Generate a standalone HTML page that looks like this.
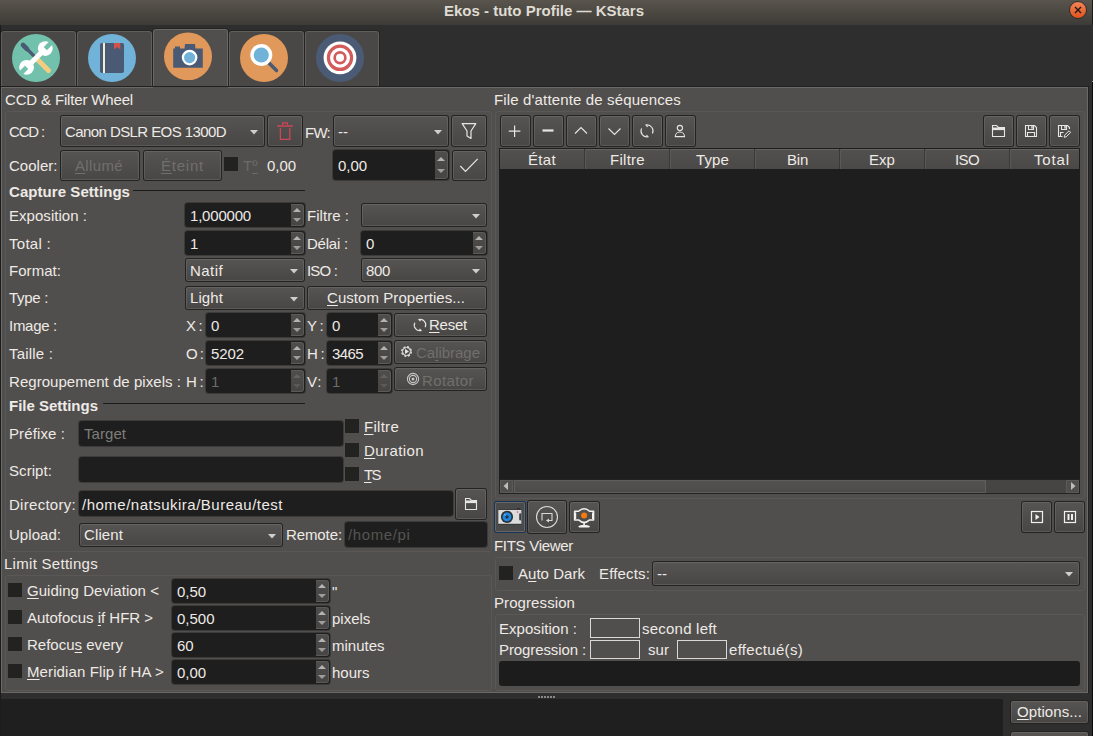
<!DOCTYPE html>
<html><head><meta charset="utf-8"><style>
html,body{margin:0;padding:0;width:1093px;height:736px;overflow:hidden;background:#2e2e2e;}
body>div,body>svg{position:absolute;}
.t{font-family:'Liberation Sans', sans-serif;line-height:20px;white-space:pre;}
u{text-decoration:underline;text-underline-offset:2px;}
</style></head><body>
<div style="left:0px;top:0px;width:1093px;height:25px;background:linear-gradient(#59554d,#3d3b37);"></div><svg style="left:1068px;top:0px" width="22" height="21"><defs><linearGradient id="cg" x1="0" y1="0" x2="0" y2="1"><stop offset="0" stop-color="#f58559"/><stop offset="1" stop-color="#df521c"/></linearGradient></defs><circle cx="10" cy="10" r="8.5" fill="url(#cg)" stroke="#2d2c29" stroke-width="1"/><path d="M7 7L13 13M13 7L7 13" stroke="#1a1a12" stroke-width="1.4"/></svg><div style="left:0px;top:25px;width:1092px;height:62px;background:#2e2e2e;"></div><div style="left:0px;top:30px;width:77px;height:57px;background:#232322;border-radius:4px 4px 0 0;"></div><div style="left:1px;top:31px;width:75px;height:55px;background:#605f5d;border-radius:3px 3px 0 0;"></div><div style="left:2px;top:32px;width:73px;height:54px;background:#4a4846;border-radius:2px 2px 0 0;"></div><div style="left:76px;top:30px;width:77px;height:57px;background:#232322;border-radius:4px 4px 0 0;"></div><div style="left:77px;top:31px;width:75px;height:55px;background:#605f5d;border-radius:3px 3px 0 0;"></div><div style="left:78px;top:32px;width:73px;height:54px;background:#4a4846;border-radius:2px 2px 0 0;"></div><div style="left:152px;top:28px;width:77px;height:60px;background:#232322;border-radius:4px 4px 0 0;"></div><div style="left:153px;top:29px;width:75px;height:59px;background:#6a6967;border-radius:3px 3px 0 0;"></div><div style="left:154px;top:30px;width:73px;height:59px;background:#514f4d;border-radius:2px 2px 0 0;"></div><div style="left:228px;top:30px;width:77px;height:57px;background:#232322;border-radius:4px 4px 0 0;"></div><div style="left:229px;top:31px;width:75px;height:55px;background:#605f5d;border-radius:3px 3px 0 0;"></div><div style="left:230px;top:32px;width:73px;height:54px;background:#4a4846;border-radius:2px 2px 0 0;"></div><div style="left:304px;top:30px;width:76px;height:57px;background:#232322;border-radius:4px 4px 0 0;"></div><div style="left:305px;top:31px;width:74px;height:55px;background:#605f5d;border-radius:3px 3px 0 0;"></div><div style="left:306px;top:32px;width:72px;height:54px;background:#4a4846;border-radius:2px 2px 0 0;"></div><div style="left:0px;top:86px;width:1089px;height:608px;background:#212121;"></div><div style="left:1px;top:87px;width:1087px;height:606px;background:#6a6967;"></div><div style="left:2px;top:88px;width:1085px;height:604px;background:#514f4d;"></div><div style="left:153px;top:87px;width:75px;height:2px;background:#514f4d;"></div><div style="left:0px;top:693px;width:1092px;height:43px;background:#2e2e2e;"></div><div style="left:0px;top:699px;width:1003px;height:37px;background:#1f1f1f;"></div><div style="left:0px;top:25px;width:1px;height:711px;background:#1c1c1c;"></div><div style="left:1092px;top:0px;width:1px;height:25px;background:#1a1a18;"></div><div style="left:1092px;top:82px;width:1px;height:654px;background:#0a0a0a;"></div><div style="left:1092px;top:81px;width:1px;height:1px;background:#9a9a9a;"></div><svg style="left:12px;top:34px" width="48" height="48" viewBox="0 0 48 48">
<defs><mask id="wm"><rect width="48" height="48" fill="#fff"/>
<path d="M33.3 14.6L42 5.9" stroke="#000" stroke-width="4.6"/>
<path d="M14.6 33.3L5.9 42" stroke="#000" stroke-width="4.6"/></mask></defs>
<circle cx="24" cy="24" r="24" fill="#72c1ad"/>
<path d="M11 11L22.5 22.5" stroke="#4b5a74" stroke-width="3.2" stroke-linecap="round"/>
<path d="M11 11L15 15" stroke="#4b5a74" stroke-width="4.6" stroke-linecap="round"/>
<path d="M25.5 25.5L36.5 36.5" stroke="#f5cd80" stroke-width="5" stroke-linecap="round"/>
<g mask="url(#wm)" fill="#fff">
<path d="M16 32L32 16" stroke="#fff" stroke-width="5.2"/>
<circle cx="33.3" cy="14.6" r="7.4"/>
<circle cx="14.6" cy="33.3" r="7.4"/>
</g>
</svg><svg style="left:88px;top:34px" width="48" height="48" viewBox="0 0 48 48">
<circle cx="24" cy="24" r="24" fill="#71b2d8"/>
<rect x="12" y="9" width="24" height="30" rx="2" fill="#4b5a74"/>
<rect x="15" y="9" width="2" height="30" fill="#f3ecd6"/>
<path d="M26 9H32.3V15.5L29.15 13L26 15.5Z" fill="#d6504c"/>
</svg><svg style="left:164px;top:32px" width="48" height="48" viewBox="0 0 48 48">
<circle cx="24" cy="24.4" r="24" fill="#e0995a"/>
<path d="M9.2 16.5H11V14.4H16V16.5H20.5L21 12.1H31L31.5 16.5H38.8V35.8H9.2Z" fill="#4b5a74"/>
<circle cx="25.6" cy="25.6" r="7.8" fill="#fff"/>
<circle cx="25.6" cy="25.6" r="5.6" fill="#71b2d8"/>
</svg><svg style="left:240px;top:34px" width="48" height="48" viewBox="0 0 48 48">
<circle cx="24" cy="24" r="24" fill="#e0995a"/>
<path d="M29 29L36.5 36.5" stroke="#4b5a74" stroke-width="3.6" stroke-linecap="round"/>
<circle cx="21.3" cy="21" r="11" fill="#fff"/>
<circle cx="21.3" cy="21" r="7.6" fill="#71b2d8"/>
</svg><svg style="left:316px;top:34px" width="48" height="48" viewBox="0 0 48 48">
<circle cx="24" cy="24" r="24" fill="#4b5b75"/>
<circle cx="24" cy="23.8" r="16.4" fill="#fff"/>
<circle cx="24" cy="23.8" r="11.6" fill="none" stroke="#d35b5b" stroke-width="3.2"/>
<circle cx="24" cy="23.8" r="5.35" fill="none" stroke="#d35b5b" stroke-width="2.7"/>
</svg><div style="left:5px;top:111px;width:487px;height:441px;border:1px solid #595856;border-radius:3px;box-sizing:border-box;"></div><div style="left:60px;top:115px;width:205px;height:32px;border-radius:3px;background:#232322;"></div><div style="left:61px;top:116px;width:203px;height:30px;border-radius:2px;background:linear-gradient(#646361,#5a5957);"></div><div style="left:62px;top:117px;width:201px;height:28px;border-radius:1px;background:linear-gradient(#555452,#484745);"></div><svg style="left:250px;top:130px" width="8" height="5"><path d="M0 0H8L4 4.5Z" fill="#cfcecc"/></svg><div style="left:267px;top:115px;width:36px;height:32px;border-radius:3px;background:#232322;"></div><div style="left:268px;top:116px;width:34px;height:30px;border-radius:2px;background:linear-gradient(#646361,#5a5957);"></div><div style="left:269px;top:117px;width:32px;height:28px;border-radius:1px;background:linear-gradient(#555452,#484745);"></div><svg style="left:276px;top:120px" width="18" height="22"><path d="M1.2 6H16.8" stroke="#cc4655" stroke-width="1.5"/><path d="M6.6 5V2.9H11.4V5" fill="none" stroke="#cc4655" stroke-width="1.2"/><path d="M4.4 8V19.3H13.8V8" fill="none" stroke="#cc4655" stroke-width="1.3"/></svg><div style="left:333px;top:115px;width:116px;height:32px;border-radius:3px;background:#232322;"></div><div style="left:334px;top:116px;width:114px;height:30px;border-radius:2px;background:linear-gradient(#646361,#5a5957);"></div><div style="left:335px;top:117px;width:112px;height:28px;border-radius:1px;background:linear-gradient(#555452,#484745);"></div><svg style="left:434px;top:130px" width="8" height="5"><path d="M0 0H8L4 4.5Z" fill="#cfcecc"/></svg><div style="left:451px;top:115px;width:36px;height:32px;border-radius:3px;background:#232322;"></div><div style="left:452px;top:116px;width:34px;height:30px;border-radius:2px;background:linear-gradient(#646361,#5a5957);"></div><div style="left:453px;top:117px;width:32px;height:28px;border-radius:1px;background:linear-gradient(#555452,#484745);"></div><svg style="left:459px;top:121px" width="20" height="20"><path d="M3.2 2.6H16.8L12 10V17.5L8 15V10Z" fill="none" stroke="#e8e6e4" stroke-width="1.2" stroke-linejoin="round"/></svg><div style="left:60px;top:150px;width:80px;height:31px;border-radius:3px;background:#232322;"></div><div style="left:61px;top:151px;width:78px;height:29px;border-radius:2px;background:linear-gradient(#646361,#5a5957);"></div><div style="left:62px;top:152px;width:76px;height:27px;border-radius:1px;background:linear-gradient(#555452,#484745);"></div><div style="left:143px;top:150px;width:79px;height:31px;border-radius:3px;background:#232322;"></div><div style="left:144px;top:151px;width:77px;height:29px;border-radius:2px;background:linear-gradient(#646361,#5a5957);"></div><div style="left:145px;top:152px;width:75px;height:27px;border-radius:1px;background:linear-gradient(#555452,#484745);"></div><div style="left:224px;top:157px;width:14px;height:14px;background:#222221;"></div><div style="left:333px;top:150px;width:116px;height:30px;border-radius:3px;background:#1e1e1e;box-shadow:0 0 0 1px #3c3b3a;"></div><div style="left:435px;top:151px;width:13px;height:28px;background:#5c5b59;border-radius:0 3px 3px 0;"></div><div style="left:435px;top:152px;width:12px;height:26px;background:linear-gradient(#4e4d4b,#464544);border-radius:0 2px 2px 0;"></div><svg style="left:435px;top:150px" width="14" height="30"><path d="M2 11L6 7L10 11Z" fill="#b4b3b1"/><path d="M2 19L6 23L10 19Z" fill="#9e9d9b"/></svg><div style="left:452px;top:150px;width:35px;height:31px;border-radius:3px;background:#232322;"></div><div style="left:453px;top:151px;width:33px;height:29px;border-radius:2px;background:linear-gradient(#646361,#5a5957);"></div><div style="left:454px;top:152px;width:31px;height:27px;border-radius:1px;background:linear-gradient(#555452,#484745);"></div><svg style="left:459px;top:155px" width="20" height="20"><path d="M1.3 11L6.5 16.5L18.7 3.8" fill="none" stroke="#e8e6e4" stroke-width="1.2"/></svg><div style="left:133px;top:190px;width:172px;height:1px;background:#1c1c1c;"></div><div style="left:185px;top:203px;width:120px;height:24px;border-radius:3px;background:#1e1e1e;box-shadow:0 0 0 1px #3c3b3a;"></div><div style="left:291px;top:204px;width:13px;height:22px;background:#5c5b59;border-radius:0 3px 3px 0;"></div><div style="left:291px;top:205px;width:12px;height:20px;background:linear-gradient(#4e4d4b,#464544);border-radius:0 2px 2px 0;"></div><svg style="left:291px;top:203px" width="14" height="24"><path d="M2 9L6 5L10 9Z" fill="#b4b3b1"/><path d="M2 15L6 19L10 15Z" fill="#9e9d9b"/></svg><div style="left:361px;top:203px;width:126px;height:24px;border-radius:3px;background:#232322;"></div><div style="left:362px;top:204px;width:124px;height:22px;border-radius:2px;background:linear-gradient(#646361,#5a5957);"></div><div style="left:363px;top:205px;width:122px;height:20px;border-radius:1px;background:linear-gradient(#555452,#484745);"></div><svg style="left:472px;top:214px" width="8" height="5"><path d="M0 0H8L4 4.5Z" fill="#cfcecc"/></svg><div style="left:185px;top:231px;width:120px;height:24px;border-radius:3px;background:#1e1e1e;box-shadow:0 0 0 1px #3c3b3a;"></div><div style="left:291px;top:232px;width:13px;height:22px;background:#5c5b59;border-radius:0 3px 3px 0;"></div><div style="left:291px;top:233px;width:12px;height:20px;background:linear-gradient(#4e4d4b,#464544);border-radius:0 2px 2px 0;"></div><svg style="left:291px;top:231px" width="14" height="24"><path d="M2 9L6 5L10 9Z" fill="#b4b3b1"/><path d="M2 15L6 19L10 15Z" fill="#9e9d9b"/></svg><div style="left:361px;top:231px;width:126px;height:24px;border-radius:3px;background:#1e1e1e;box-shadow:0 0 0 1px #3c3b3a;"></div><div style="left:473px;top:232px;width:13px;height:22px;background:#5c5b59;border-radius:0 3px 3px 0;"></div><div style="left:473px;top:233px;width:12px;height:20px;background:linear-gradient(#4e4d4b,#464544);border-radius:0 2px 2px 0;"></div><svg style="left:473px;top:231px" width="14" height="24"><path d="M2 9L6 5L10 9Z" fill="#b4b3b1"/><path d="M2 15L6 19L10 15Z" fill="#9e9d9b"/></svg><div style="left:185px;top:258px;width:120px;height:24px;border-radius:3px;background:#232322;"></div><div style="left:186px;top:259px;width:118px;height:22px;border-radius:2px;background:linear-gradient(#646361,#5a5957);"></div><div style="left:187px;top:260px;width:116px;height:20px;border-radius:1px;background:linear-gradient(#555452,#484745);"></div><svg style="left:290px;top:269px" width="8" height="5"><path d="M0 0H8L4 4.5Z" fill="#cfcecc"/></svg><div style="left:361px;top:258px;width:126px;height:24px;border-radius:3px;background:#232322;"></div><div style="left:362px;top:259px;width:124px;height:22px;border-radius:2px;background:linear-gradient(#646361,#5a5957);"></div><div style="left:363px;top:260px;width:122px;height:20px;border-radius:1px;background:linear-gradient(#555452,#484745);"></div><svg style="left:472px;top:269px" width="8" height="5"><path d="M0 0H8L4 4.5Z" fill="#cfcecc"/></svg><div style="left:185px;top:286px;width:120px;height:24px;border-radius:3px;background:#232322;"></div><div style="left:186px;top:287px;width:118px;height:22px;border-radius:2px;background:linear-gradient(#646361,#5a5957);"></div><div style="left:187px;top:288px;width:116px;height:20px;border-radius:1px;background:linear-gradient(#555452,#484745);"></div><svg style="left:290px;top:297px" width="8" height="5"><path d="M0 0H8L4 4.5Z" fill="#cfcecc"/></svg><div style="left:307px;top:286px;width:180px;height:24px;border-radius:3px;background:#232322;"></div><div style="left:308px;top:287px;width:178px;height:22px;border-radius:2px;background:linear-gradient(#646361,#5a5957);"></div><div style="left:309px;top:288px;width:176px;height:20px;border-radius:1px;background:linear-gradient(#555452,#484745);"></div><div style="left:206px;top:313px;width:99px;height:24px;border-radius:3px;background:#1e1e1e;box-shadow:0 0 0 1px #3c3b3a;"></div><div style="left:291px;top:314px;width:13px;height:22px;background:#5c5b59;border-radius:0 3px 3px 0;"></div><div style="left:291px;top:315px;width:12px;height:20px;background:linear-gradient(#4e4d4b,#464544);border-radius:0 2px 2px 0;"></div><svg style="left:291px;top:313px" width="14" height="24"><path d="M2 9L6 5L10 9Z" fill="#b4b3b1"/><path d="M2 15L6 19L10 15Z" fill="#9e9d9b"/></svg><div style="left:327px;top:313px;width:65px;height:24px;border-radius:3px;background:#1e1e1e;box-shadow:0 0 0 1px #3c3b3a;"></div><div style="left:378px;top:314px;width:13px;height:22px;background:#5c5b59;border-radius:0 3px 3px 0;"></div><div style="left:378px;top:315px;width:12px;height:20px;background:linear-gradient(#4e4d4b,#464544);border-radius:0 2px 2px 0;"></div><svg style="left:378px;top:313px" width="14" height="24"><path d="M2 9L6 5L10 9Z" fill="#b4b3b1"/><path d="M2 15L6 19L10 15Z" fill="#9e9d9b"/></svg><div style="left:394px;top:313px;width:93px;height:24px;border-radius:3px;background:#232322;"></div><div style="left:395px;top:314px;width:91px;height:22px;border-radius:2px;background:linear-gradient(#646361,#5a5957);"></div><div style="left:396px;top:315px;width:89px;height:20px;border-radius:1px;background:linear-gradient(#555452,#484745);"></div><svg style="left:412px;top:318px" width="16" height="16"><path d="M6.9 1.6A5.5 5.5 0 0 1 13.2 9.3M9.1 12.4A5.5 5.5 0 0 1 2.8 4.7" fill="none" stroke="#e8e6e4" stroke-width="1.1"/><path d="M6.5 1.2L8.5 3.2M9.5 12.8L7.5 10.8" fill="none" stroke="#e8e6e4" stroke-width="1.1"/></svg><div style="left:206px;top:341px;width:99px;height:24px;border-radius:3px;background:#1e1e1e;box-shadow:0 0 0 1px #3c3b3a;"></div><div style="left:291px;top:342px;width:13px;height:22px;background:#5c5b59;border-radius:0 3px 3px 0;"></div><div style="left:291px;top:343px;width:12px;height:20px;background:linear-gradient(#4e4d4b,#464544);border-radius:0 2px 2px 0;"></div><svg style="left:291px;top:341px" width="14" height="24"><path d="M2 9L6 5L10 9Z" fill="#b4b3b1"/><path d="M2 15L6 19L10 15Z" fill="#9e9d9b"/></svg><div style="left:327px;top:341px;width:65px;height:24px;border-radius:3px;background:#1e1e1e;box-shadow:0 0 0 1px #3c3b3a;"></div><div style="left:378px;top:342px;width:13px;height:22px;background:#5c5b59;border-radius:0 3px 3px 0;"></div><div style="left:378px;top:343px;width:12px;height:20px;background:linear-gradient(#4e4d4b,#464544);border-radius:0 2px 2px 0;"></div><svg style="left:378px;top:341px" width="14" height="24"><path d="M2 9L6 5L10 9Z" fill="#b4b3b1"/><path d="M2 15L6 19L10 15Z" fill="#9e9d9b"/></svg><div style="left:394px;top:340px;width:93px;height:24px;border-radius:3px;background:#232322;"></div><div style="left:395px;top:341px;width:91px;height:22px;border-radius:2px;background:linear-gradient(#646361,#5a5957);"></div><div style="left:396px;top:342px;width:89px;height:20px;border-radius:1px;background:linear-gradient(#555452,#484745);"></div><svg style="left:399px;top:344px" width="15" height="15"><circle cx="7.5" cy="7.5" r="4.8" fill="none" stroke="#e8e6e4" stroke-width="1.3" stroke-dasharray="2.2 1.57"/><circle cx="7.5" cy="7.5" r="4" fill="none" stroke="#e8e6e4" stroke-width="1"/><path d="M6 5V10L10 7.5Z" fill="#e8e6e4"/></svg><div style="left:206px;top:369px;width:99px;height:24px;border-radius:3px;background:#1e1e1e;box-shadow:0 0 0 1px #3c3b3a;"></div><div style="left:291px;top:370px;width:13px;height:22px;background:#5c5b59;border-radius:0 3px 3px 0;"></div><div style="left:291px;top:371px;width:12px;height:20px;background:linear-gradient(#4e4d4b,#464544);border-radius:0 2px 2px 0;"></div><svg style="left:291px;top:369px" width="14" height="24"><path d="M2 9L6 5L10 9Z" fill="#626160"/><path d="M2 15L6 19L10 15Z" fill="#5a5957"/></svg><div style="left:327px;top:369px;width:65px;height:24px;border-radius:3px;background:#1e1e1e;box-shadow:0 0 0 1px #3c3b3a;"></div><div style="left:378px;top:370px;width:13px;height:22px;background:#5c5b59;border-radius:0 3px 3px 0;"></div><div style="left:378px;top:371px;width:12px;height:20px;background:linear-gradient(#4e4d4b,#464544);border-radius:0 2px 2px 0;"></div><svg style="left:378px;top:369px" width="14" height="24"><path d="M2 9L6 5L10 9Z" fill="#626160"/><path d="M2 15L6 19L10 15Z" fill="#5a5957"/></svg><div style="left:394px;top:367px;width:93px;height:24px;border-radius:3px;background:#232322;"></div><div style="left:395px;top:368px;width:91px;height:22px;border-radius:2px;background:linear-gradient(#646361,#5a5957);"></div><div style="left:396px;top:369px;width:89px;height:20px;border-radius:1px;background:linear-gradient(#555452,#484745);"></div><svg style="left:406px;top:372px" width="14" height="14"><circle cx="7" cy="7" r="5.6" fill="none" stroke="#c8c6c4" stroke-width="1.1"/><circle cx="7" cy="7" r="3.6" fill="none" stroke="#c8c6c4" stroke-width="1.1"/><circle cx="7" cy="7" r="1.5" fill="#c8c6c4"/></svg><div style="left:103px;top:403px;width:202px;height:1px;background:#1c1c1c;"></div><div style="left:79px;top:421px;width:264px;height:25px;border-radius:3px;background:#1e1e1e;box-shadow:0 0 0 1px #3c3b3a;"></div><div style="left:79px;top:457px;width:264px;height:25px;border-radius:3px;background:#1e1e1e;box-shadow:0 0 0 1px #3c3b3a;"></div><div style="left:345px;top:419px;width:14px;height:14px;background:#222221;"></div><div style="left:345px;top:443px;width:14px;height:14px;background:#222221;"></div><div style="left:345px;top:467px;width:14px;height:14px;background:#222221;"></div><div style="left:79px;top:491px;width:374px;height:25px;border-radius:3px;background:#1e1e1e;box-shadow:0 0 0 1px #3c3b3a;"></div><div style="left:455px;top:488px;width:32px;height:32px;border-radius:3px;background:#232322;"></div><div style="left:456px;top:489px;width:30px;height:30px;border-radius:2px;background:linear-gradient(#646361,#5a5957);"></div><div style="left:457px;top:490px;width:28px;height:28px;border-radius:1px;background:linear-gradient(#555452,#484745);"></div><svg style="left:455px;top:489px" width="32" height="30"><path d="M10.5 20.5V9.5H14.5L16.5 11.5H21.5V20.5Z" fill="none" stroke="#e8e6e4" stroke-width="1.1"/><rect x="10" y="11.5" width="12" height="2.6" fill="#e8e6e4"/></svg><div style="left:79px;top:523px;width:204px;height:24px;border-radius:3px;background:#232322;"></div><div style="left:80px;top:524px;width:202px;height:22px;border-radius:2px;background:linear-gradient(#646361,#5a5957);"></div><div style="left:81px;top:525px;width:200px;height:20px;border-radius:1px;background:linear-gradient(#555452,#484745);"></div><svg style="left:268px;top:534px" width="8" height="5"><path d="M0 0H8L4 4.5Z" fill="#cfcecc"/></svg><div style="left:345px;top:522px;width:142px;height:25px;border-radius:3px;background:#1e1e1e;box-shadow:0 0 0 1px #3c3b3a;"></div><div style="left:5px;top:575px;width:487px;height:116px;border:1px solid #595856;border-radius:3px;box-sizing:border-box;"></div><div style="left:8px;top:583px;width:14px;height:14px;background:#222221;"></div><div style="left:172px;top:579px;width:158px;height:24px;border-radius:3px;background:#1e1e1e;box-shadow:0 0 0 1px #3c3b3a;"></div><div style="left:316px;top:580px;width:13px;height:22px;background:#5c5b59;border-radius:0 3px 3px 0;"></div><div style="left:316px;top:581px;width:12px;height:20px;background:linear-gradient(#4e4d4b,#464544);border-radius:0 2px 2px 0;"></div><svg style="left:316px;top:579px" width="14" height="24"><path d="M2 9L6 5L10 9Z" fill="#b4b3b1"/><path d="M2 15L6 19L10 15Z" fill="#9e9d9b"/></svg><div style="left:8px;top:610px;width:14px;height:14px;background:#222221;"></div><div style="left:172px;top:606px;width:158px;height:24px;border-radius:3px;background:#1e1e1e;box-shadow:0 0 0 1px #3c3b3a;"></div><div style="left:316px;top:607px;width:13px;height:22px;background:#5c5b59;border-radius:0 3px 3px 0;"></div><div style="left:316px;top:608px;width:12px;height:20px;background:linear-gradient(#4e4d4b,#464544);border-radius:0 2px 2px 0;"></div><svg style="left:316px;top:606px" width="14" height="24"><path d="M2 9L6 5L10 9Z" fill="#b4b3b1"/><path d="M2 15L6 19L10 15Z" fill="#9e9d9b"/></svg><div style="left:8px;top:637px;width:14px;height:14px;background:#222221;"></div><div style="left:172px;top:633px;width:158px;height:24px;border-radius:3px;background:#1e1e1e;box-shadow:0 0 0 1px #3c3b3a;"></div><div style="left:316px;top:634px;width:13px;height:22px;background:#5c5b59;border-radius:0 3px 3px 0;"></div><div style="left:316px;top:635px;width:12px;height:20px;background:linear-gradient(#4e4d4b,#464544);border-radius:0 2px 2px 0;"></div><svg style="left:316px;top:633px" width="14" height="24"><path d="M2 9L6 5L10 9Z" fill="#b4b3b1"/><path d="M2 15L6 19L10 15Z" fill="#9e9d9b"/></svg><div style="left:8px;top:664px;width:14px;height:14px;background:#222221;"></div><div style="left:172px;top:660px;width:158px;height:24px;border-radius:3px;background:#1e1e1e;box-shadow:0 0 0 1px #3c3b3a;"></div><div style="left:316px;top:661px;width:13px;height:22px;background:#5c5b59;border-radius:0 3px 3px 0;"></div><div style="left:316px;top:662px;width:12px;height:20px;background:linear-gradient(#4e4d4b,#464544);border-radius:0 2px 2px 0;"></div><svg style="left:316px;top:660px" width="14" height="24"><path d="M2 9L6 5L10 9Z" fill="#b4b3b1"/><path d="M2 15L6 19L10 15Z" fill="#9e9d9b"/></svg><div style="left:495px;top:111px;width:590px;height:388px;border:1px solid #595856;border-radius:3px;box-sizing:border-box;"></div><div style="left:500px;top:115px;width:31px;height:32px;border-radius:3px;background:#232322;"></div><div style="left:501px;top:116px;width:29px;height:30px;border-radius:2px;background:linear-gradient(#646361,#5a5957);"></div><div style="left:502px;top:117px;width:27px;height:28px;border-radius:1px;background:linear-gradient(#555452,#484745);"></div><div style="left:533px;top:115px;width:31px;height:32px;border-radius:3px;background:#232322;"></div><div style="left:534px;top:116px;width:29px;height:30px;border-radius:2px;background:linear-gradient(#646361,#5a5957);"></div><div style="left:535px;top:117px;width:27px;height:28px;border-radius:1px;background:linear-gradient(#555452,#484745);"></div><div style="left:566px;top:115px;width:31px;height:32px;border-radius:3px;background:#232322;"></div><div style="left:567px;top:116px;width:29px;height:30px;border-radius:2px;background:linear-gradient(#646361,#5a5957);"></div><div style="left:568px;top:117px;width:27px;height:28px;border-radius:1px;background:linear-gradient(#555452,#484745);"></div><div style="left:599px;top:115px;width:31px;height:32px;border-radius:3px;background:#232322;"></div><div style="left:600px;top:116px;width:29px;height:30px;border-radius:2px;background:linear-gradient(#646361,#5a5957);"></div><div style="left:601px;top:117px;width:27px;height:28px;border-radius:1px;background:linear-gradient(#555452,#484745);"></div><div style="left:632px;top:115px;width:31px;height:32px;border-radius:3px;background:#232322;"></div><div style="left:633px;top:116px;width:29px;height:30px;border-radius:2px;background:linear-gradient(#646361,#5a5957);"></div><div style="left:634px;top:117px;width:27px;height:28px;border-radius:1px;background:linear-gradient(#555452,#484745);"></div><div style="left:665px;top:115px;width:31px;height:32px;border-radius:3px;background:#232322;"></div><div style="left:666px;top:116px;width:29px;height:30px;border-radius:2px;background:linear-gradient(#646361,#5a5957);"></div><div style="left:667px;top:117px;width:27px;height:28px;border-radius:1px;background:linear-gradient(#555452,#484745);"></div><div style="left:983px;top:115px;width:31px;height:32px;border-radius:3px;background:#232322;"></div><div style="left:984px;top:116px;width:29px;height:30px;border-radius:2px;background:linear-gradient(#646361,#5a5957);"></div><div style="left:985px;top:117px;width:27px;height:28px;border-radius:1px;background:linear-gradient(#555452,#484745);"></div><div style="left:1016px;top:115px;width:31px;height:32px;border-radius:3px;background:#232322;"></div><div style="left:1017px;top:116px;width:29px;height:30px;border-radius:2px;background:linear-gradient(#646361,#5a5957);"></div><div style="left:1018px;top:117px;width:27px;height:28px;border-radius:1px;background:linear-gradient(#555452,#484745);"></div><div style="left:1049px;top:115px;width:31px;height:32px;border-radius:3px;background:#232322;"></div><div style="left:1050px;top:116px;width:29px;height:30px;border-radius:2px;background:linear-gradient(#646361,#5a5957);"></div><div style="left:1051px;top:117px;width:27px;height:28px;border-radius:1px;background:linear-gradient(#555452,#484745);"></div><svg style="left:500px;top:115px" width="196" height="32"><path d="M14.6 10.5V22M8.8 16.2H20.4" stroke="#e8e6e4" stroke-width="1.2"/><path d="M42.5 15.5H53.5" stroke="#e8e6e4" stroke-width="2.2"/><path d="M75 18.5L81 12.5L87 18.5" fill="none" stroke="#e8e6e4" stroke-width="1.1"/><path d="M108.5 13.5L114.5 19.5L120.5 13.5" fill="none" stroke="#e8e6e4" stroke-width="1.1"/><path d="M145.96 9.99A6 6 0 0 1 152.44 18.44M148.04 21.81A6 6 0 0 1 141.56 13.36" fill="none" stroke="#e8e6e4" stroke-width="1.1"/><path d="M145.6 9.6L147.6 11.8M148.4 22.2L146.4 20" fill="none" stroke="#e8e6e4" stroke-width="1.1"/><circle cx="179.9" cy="13" r="2.6" fill="none" stroke="#e8e6e4" stroke-width="1.1"/><path d="M175.3 21.6H184.5A4.6 4.6 0 0 0 175.3 21.6Z" fill="none" stroke="#e8e6e4" stroke-width="1.1"/></svg><svg style="left:983px;top:115px" width="97" height="32"><path d="M9.5 21.5V10.5H13.5L15.5 12.5H21.5V21.5Z" fill="none" stroke="#e8e6e4" stroke-width="1.1"/><rect x="9" y="12.5" width="13" height="2.6" fill="#e8e6e4"/><path d="M42.5 10.5H51.5L53.5 12.5V21.5H42.5Z M45.5 10.5V14.5H50.5V10.5 M44.5 21.5V17.5H51.5V21.5" fill="none" stroke="#e8e6e4" stroke-width="1.1"/><rect x="48.3" y="11" width="1.4" height="2.6" fill="#e8e6e4"/><path d="M79.5 21.5H75.5V10.5H84.5L86.5 12.5V14 M78.5 10.5V14.5H83.5V10.5 M77.5 21.5V17.5H80.5" fill="none" stroke="#e8e6e4" stroke-width="1.1"/><rect x="81.3" y="11" width="1.4" height="2.6" fill="#e8e6e4"/><path d="M81.2 22.3L81.6 20.2L86 15.8L87.6 17.4L83.2 21.8Z" fill="none" stroke="#e8e6e4" stroke-width="1"/></svg><div style="left:499px;top:148px;width:581px;height:332px;background:#1e1e1e;"></div><div style="left:500px;top:149px;width:579px;height:20px;background:linear-gradient(#52514f,#4a4947);box-shadow:inset 0 1px 0 #646361;"></div><div style="left:584px;top:149px;width:1px;height:20px;background:#3a3938;"></div><div style="left:585px;top:149px;width:1px;height:20px;background:#5a5957;"></div><div style="left:669px;top:149px;width:1px;height:20px;background:#3a3938;"></div><div style="left:670px;top:149px;width:1px;height:20px;background:#5a5957;"></div><div style="left:754px;top:149px;width:1px;height:20px;background:#3a3938;"></div><div style="left:755px;top:149px;width:1px;height:20px;background:#5a5957;"></div><div style="left:839px;top:149px;width:1px;height:20px;background:#3a3938;"></div><div style="left:840px;top:149px;width:1px;height:20px;background:#5a5957;"></div><div style="left:924px;top:149px;width:1px;height:20px;background:#3a3938;"></div><div style="left:925px;top:149px;width:1px;height:20px;background:#5a5957;"></div><div style="left:1009px;top:149px;width:1px;height:20px;background:#3a3938;"></div><div style="left:1010px;top:149px;width:1px;height:20px;background:#5a5957;"></div><div style="left:499px;top:479px;width:581px;height:15px;background:#232322;"></div><div style="left:500px;top:480px;width:579px;height:13px;background:#464544;"></div><div style="left:500px;top:480px;width:13px;height:13px;background:#4f4e4c;box-shadow:inset 0 0 0 1px #5a5957;"></div><div style="left:514px;top:480px;width:472px;height:13px;background:linear-gradient(#545351,#4c4b49);box-shadow:inset 0 0 0 1px #5e5d5b;"></div><div style="left:1066px;top:480px;width:13px;height:13px;background:#4f4e4c;box-shadow:inset 0 0 0 1px #5a5957;"></div><svg style="left:500px;top:480px" width="13" height="12"><path d="M3.5 6L8 2V10Z" fill="#bdbcba"/></svg><svg style="left:1066px;top:480px" width="13" height="12"><path d="M9.5 6L5 2V10Z" fill="#bdbcba"/></svg><div style="left:494px;top:501px;width:32px;height:32px;border-radius:3px;background:#173357;"></div><div style="left:495px;top:502px;width:30px;height:30px;border-radius:2px;background:#686766;"></div><div style="left:496px;top:503px;width:28px;height:28px;border-radius:1px;background:#4a4a4a;"></div><div style="left:527px;top:500px;width:40px;height:34px;border-radius:3px;background:#232322;"></div><div style="left:528px;top:501px;width:38px;height:32px;border-radius:2px;background:linear-gradient(#646361,#5a5957);"></div><div style="left:529px;top:502px;width:36px;height:30px;border-radius:1px;background:linear-gradient(#555452,#484745);"></div><div style="left:569px;top:501px;width:31px;height:32px;border-radius:3px;background:#232322;"></div><div style="left:570px;top:502px;width:29px;height:30px;border-radius:2px;background:linear-gradient(#646361,#5a5957);"></div><div style="left:571px;top:503px;width:27px;height:28px;border-radius:1px;background:linear-gradient(#555452,#484745);"></div><svg style="left:494px;top:501px" width="32" height="32"><rect x="4.3" y="8" width="23.1" height="15.5" fill="#2a2a2a"/><rect x="23" y="7.2" width="3" height="1.5" fill="#2a2a2a"/><rect x="4.3" y="8.9" width="23.1" height="13.9" fill="#dcdcdc"/><circle cx="13" cy="15.9" r="6.1" fill="#2e3338"/><circle cx="13" cy="15.9" r="4.4" fill="#1e88e5"/><circle cx="13" cy="15.9" r="1.7" fill="#20303e"/><path d="M10.3 13.3L11.6 14.5" stroke="#9cd0ff" stroke-width="1"/><rect x="22.9" y="10.3" width="1.3" height="1.5" fill="#e8577a"/><rect x="25.2" y="12.2" width="2" height="7.4" rx="1" fill="#3a3f46"/></svg><svg style="left:527px;top:500px" width="40" height="34"><circle cx="20" cy="17" r="10.5" fill="none" stroke="#dcdad8" stroke-width="1.1"/><path d="M15 20.5V13.5H25V20.5H21" fill="none" stroke="#dcdad8" stroke-width="1.1"/><path d="M19 20.5L22 18.5V22.5Z" fill="#dcdad8"/></svg><svg style="left:568px;top:501px" width="32" height="32"><path d="M6.6 10.3H10.6Q16.1 5.2 21.6 10.3H25.6V18.9H21.6Q16.1 24 10.6 18.9H6.6Z" fill="none" stroke="#f2f2f2" stroke-width="1.5" stroke-linejoin="round"/><path d="M7.5 11.5V18M24.7 11.5V18" stroke="#f2f2f2" stroke-width="1.4"/><circle cx="16.1" cy="14.6" r="3" fill="#f77a0c"/><path d="M16.1 20.7V24.5" stroke="#f2f2f2" stroke-width="1.6"/><path d="M10.9 26V25.3Q16.1 23 21.3 25.3V26Z" fill="#f2f2f2" stroke="#f2f2f2" stroke-width="1"/></svg><div style="left:1021px;top:501px;width:31px;height:32px;border-radius:3px;background:#232322;"></div><div style="left:1022px;top:502px;width:29px;height:30px;border-radius:2px;background:linear-gradient(#646361,#5a5957);"></div><div style="left:1023px;top:503px;width:27px;height:28px;border-radius:1px;background:linear-gradient(#555452,#484745);"></div><div style="left:1054px;top:501px;width:31px;height:32px;border-radius:3px;background:#232322;"></div><div style="left:1055px;top:502px;width:29px;height:30px;border-radius:2px;background:linear-gradient(#646361,#5a5957);"></div><div style="left:1056px;top:503px;width:27px;height:28px;border-radius:1px;background:linear-gradient(#555452,#484745);"></div><svg style="left:1021px;top:501px" width="64" height="32"><rect x="10.5" y="10.5" width="11" height="11" fill="none" stroke="#f0f0f0" stroke-width="1.2"/><path d="M14.5 13V19L18.5 16Z" fill="#f0f0f0"/><rect x="43.5" y="10.5" width="11" height="11" fill="none" stroke="#f0f0f0" stroke-width="1.2"/><rect x="46.5" y="13" width="2" height="6" fill="#f0f0f0"/><rect x="50" y="13" width="2" height="6" fill="#f0f0f0"/></svg><div style="left:495px;top:557px;width:590px;height:34px;border:1px solid #595856;border-radius:3px;box-sizing:border-box;"></div><div style="left:499px;top:566px;width:14px;height:14px;background:#222221;"></div><div style="left:652px;top:561px;width:428px;height:25px;border-radius:3px;background:#232322;"></div><div style="left:653px;top:562px;width:426px;height:23px;border-radius:2px;background:linear-gradient(#646361,#5a5957);"></div><div style="left:654px;top:563px;width:424px;height:21px;border-radius:1px;background:linear-gradient(#555452,#484745);"></div><svg style="left:1065px;top:572px" width="8" height="5"><path d="M0 0H8L4 4.5Z" fill="#cfcecc"/></svg><div style="left:495px;top:614px;width:590px;height:77px;border:1px solid #595856;border-radius:3px;box-sizing:border-box;"></div><div style="left:590px;top:618px;width:50px;height:20px;border:1px solid #dad8d6;box-sizing:border-box;"></div><div style="left:590px;top:640px;width:50px;height:19px;border:1px solid #dad8d6;box-sizing:border-box;"></div><div style="left:677px;top:640px;width:50px;height:19px;border:1px solid #dad8d6;box-sizing:border-box;"></div><div style="left:499px;top:661px;width:581px;height:25px;background:#1c1c1c;border-radius:3px;"></div><div style="left:538px;top:696px;width:2px;height:2px;background:#8a8886;"></div><div style="left:541px;top:696px;width:2px;height:2px;background:#8a8886;"></div><div style="left:544px;top:696px;width:2px;height:2px;background:#8a8886;"></div><div style="left:547px;top:696px;width:2px;height:2px;background:#8a8886;"></div><div style="left:550px;top:696px;width:2px;height:2px;background:#8a8886;"></div><div style="left:553px;top:696px;width:2px;height:2px;background:#8a8886;"></div><div style="left:1010px;top:700px;width:79px;height:24px;border-radius:3px;background:#232322;"></div><div style="left:1011px;top:701px;width:77px;height:22px;border-radius:2px;background:linear-gradient(#646361,#5a5957);"></div><div style="left:1012px;top:702px;width:75px;height:20px;border-radius:1px;background:linear-gradient(#555452,#484745);"></div><div style="left:1010px;top:731px;width:79px;height:29px;border-radius:3px;background:#232322;"></div><div style="left:1011px;top:732px;width:77px;height:27px;border-radius:2px;background:linear-gradient(#646361,#5a5957);"></div><div style="left:1012px;top:733px;width:75px;height:25px;border-radius:1px;background:linear-gradient(#555452,#484745);"></div>
<div class="t" style="left:444px;top:1px;font-size:15px;font-weight:bold;color:#dfdbd2;letter-spacing:-0.002px;">Ekos - tuto Profile — KStars</div><div class="t" style="left:5px;top:90px;font-size:15px;color:#eeeae6;letter-spacing:-0.159px;">CCD &amp; Filter Wheel</div><div class="t" style="left:9px;top:122px;font-size:15px;color:#eeeae6;letter-spacing:-1.169px;">CCD :</div><div class="t" style="left:65px;top:122px;font-size:15px;color:#eeeae6;letter-spacing:-0.580px;">Canon DSLR EOS 1300D</div><div class="t" style="left:305px;top:123px;font-size:15px;color:#eeeae6;letter-spacing:-0.740px;">FW:</div><div class="t" style="left:338px;top:122px;font-size:15px;color:#eeeae6;">--</div><div class="t" style="left:9px;top:156px;font-size:15px;color:#eeeae6;letter-spacing:0.020px;">Cooler:</div><div class="t" style="left:75px;top:156px;font-size:15px;color:#716f6d;letter-spacing:0.354px;"><u>A</u>llumé</div><div class="t" style="left:161px;top:156px;font-size:15px;color:#716f6d;letter-spacing:0.771px;"><u>É</u>teint</div><div class="t" style="left:243px;top:156px;font-size:15px;color:#6c6b69;">T<u>º</u></div><div class="t" style="left:267px;top:156px;font-size:15px;color:#eeeae6;letter-spacing:-0.051px;">0,00</div><div class="t" style="left:338px;top:156px;font-size:15px;color:#eeeae6;letter-spacing:-0.051px;">0,00</div><div class="t" style="left:9px;top:182px;font-size:15px;font-weight:bold;color:#eeeae6;letter-spacing:0.062px;">Capture Settings</div><div class="t" style="left:9px;top:206px;font-size:15px;color:#eeeae6;letter-spacing:0.038px;">Exposition :</div><div class="t" style="left:190px;top:206px;font-size:15px;color:#eeeae6;letter-spacing:-0.197px;">1,000000</div><div class="t" style="left:307px;top:206px;font-size:15px;color:#eeeae6;letter-spacing:0.041px;">Filtre :</div><div class="t" style="left:9px;top:234px;font-size:15px;color:#eeeae6;letter-spacing:0.281px;">Total :</div><div class="t" style="left:190px;top:234px;font-size:15px;color:#eeeae6;">1</div><div class="t" style="left:307px;top:234px;font-size:15px;color:#eeeae6;letter-spacing:-0.219px;">Délai :</div><div class="t" style="left:366px;top:234px;font-size:15px;color:#eeeae6;">0</div><div class="t" style="left:9px;top:261px;font-size:15px;color:#eeeae6;letter-spacing:0.045px;">Format:</div><div class="t" style="left:190px;top:261px;font-size:15px;color:#eeeae6;letter-spacing:0.431px;">Natif</div><div class="t" style="left:307px;top:261px;font-size:15px;color:#eeeae6;letter-spacing:-0.838px;">ISO :</div><div class="t" style="left:366px;top:261px;font-size:15px;color:#eeeae6;letter-spacing:-0.344px;">800</div><div class="t" style="left:9px;top:288px;font-size:15px;color:#eeeae6;letter-spacing:-0.310px;">Type :</div><div class="t" style="left:190px;top:288px;font-size:15px;color:#eeeae6;letter-spacing:0.094px;">Light</div><div class="t" style="left:327px;top:288px;font-size:15px;color:#eeeae6;letter-spacing:0.063px;"><u>C</u>ustom Properties...</div><div class="t" style="left:9px;top:316px;font-size:15px;color:#eeeae6;letter-spacing:-0.290px;">Image :</div><div class="t" style="left:186px;top:316px;font-size:15px;color:#eeeae6;letter-spacing:-0.781px;">X :</div><div class="t" style="left:211px;top:316px;font-size:15px;color:#eeeae6;">0</div><div class="t" style="left:307px;top:316px;font-size:15px;color:#eeeae6;letter-spacing:-0.693px;">Y :</div><div class="t" style="left:332px;top:316px;font-size:15px;color:#eeeae6;">0</div><div class="t" style="left:429px;top:315px;font-size:15px;color:#eeeae6;letter-spacing:-0.241px;"><u>R</u>eset</div><div class="t" style="left:9px;top:344px;font-size:15px;color:#eeeae6;letter-spacing:0.184px;">Taille :</div><div class="t" style="left:186px;top:344px;font-size:15px;color:#eeeae6;letter-spacing:-1.005px;">O :</div><div class="t" style="left:211px;top:344px;font-size:15px;color:#eeeae6;letter-spacing:-0.094px;">5202</div><div class="t" style="left:307px;top:344px;font-size:15px;color:#eeeae6;letter-spacing:-0.724px;">H :</div><div class="t" style="left:332px;top:344px;font-size:15px;color:#eeeae6;letter-spacing:-0.594px;">3465</div><div class="t" style="left:416px;top:343px;font-size:15px;color:#716f6d;letter-spacing:-0.026px;">Ca<u>l</u>ibrage</div><div class="t" style="left:9px;top:372px;font-size:15px;color:#eeeae6;letter-spacing:0.044px;">Regroupement de pixels :</div><div class="t" style="left:186px;top:372px;font-size:15px;color:#eeeae6;letter-spacing:-0.724px;">H :</div><div class="t" style="left:211px;top:372px;font-size:15px;color:#6c6b69;">1</div><div class="t" style="left:307px;top:372px;font-size:15px;color:#eeeae6;letter-spacing:0.688px;">V:</div><div class="t" style="left:332px;top:372px;font-size:15px;color:#6c6b69;">1</div><div class="t" style="left:422px;top:371px;font-size:15px;color:#716f6d;letter-spacing:0.400px;">Rotator</div><div class="t" style="left:9px;top:396px;font-size:15px;font-weight:bold;color:#eeeae6;letter-spacing:-0.014px;">File Settings</div><div class="t" style="left:9px;top:424px;font-size:15px;color:#eeeae6;letter-spacing:0.108px;">Préfixe :</div><div class="t" style="left:84px;top:424px;font-size:15px;color:#7f7d7b;letter-spacing:0.049px;">Target</div><div class="t" style="left:9px;top:461px;font-size:15px;color:#eeeae6;letter-spacing:0.069px;">Script:</div><div class="t" style="left:364px;top:417px;font-size:15px;color:#eeeae6;letter-spacing:0.276px;"><u>F</u>iltre</div><div class="t" style="left:364px;top:441px;font-size:15px;color:#eeeae6;letter-spacing:0.410px;"><u>D</u>uration</div><div class="t" style="left:364px;top:465px;font-size:15px;color:#eeeae6;letter-spacing:-1.594px;"><u>T</u>S</div><div class="t" style="left:9px;top:495px;font-size:15px;color:#eeeae6;letter-spacing:0.281px;">Directory:</div><div class="t" style="left:82px;top:495px;font-size:15px;color:#eeeae6;letter-spacing:0.496px;">/home/natsukira/Bureau/test</div><div class="t" style="left:9px;top:525px;font-size:15px;color:#eeeae6;letter-spacing:0.042px;">Upload:</div><div class="t" style="left:84px;top:525px;font-size:15px;color:#eeeae6;letter-spacing:0.107px;">Client</div><div class="t" style="left:286px;top:525px;font-size:15px;color:#eeeae6;letter-spacing:-0.100px;">Remote:</div><div class="t" style="left:348px;top:525px;font-size:15px;color:#555452;letter-spacing:0.619px;">/home/pi</div><div class="t" style="left:4px;top:554px;font-size:15px;color:#eeeae6;letter-spacing:0.282px;">Limit Settings</div><div class="t" style="left:27px;top:581px;font-size:15px;color:#eeeae6;letter-spacing:0.035px;"><u>G</u>uiding Deviation &lt;</div><div class="t" style="left:177px;top:582px;font-size:15px;color:#eeeae6;">0,50</div><div class="t" style="left:332px;top:582px;font-size:15px;color:#eeeae6;">"</div><div class="t" style="left:27px;top:608px;font-size:15px;color:#eeeae6;letter-spacing:-0.018px;">Autofocus <u>i</u>f HFR &gt;</div><div class="t" style="left:177px;top:609px;font-size:15px;color:#eeeae6;">0,500</div><div class="t" style="left:332px;top:609px;font-size:15px;color:#eeeae6;">pixels</div><div class="t" style="left:27px;top:635px;font-size:15px;color:#eeeae6;letter-spacing:0.008px;">Refocu<u>s</u> every</div><div class="t" style="left:177px;top:636px;font-size:15px;color:#eeeae6;">60</div><div class="t" style="left:332px;top:636px;font-size:15px;color:#eeeae6;">minutes</div><div class="t" style="left:27px;top:662px;font-size:15px;color:#eeeae6;letter-spacing:0.112px;"><u>M</u>eridian Flip if HA &gt;</div><div class="t" style="left:177px;top:663px;font-size:15px;color:#eeeae6;">0,00</div><div class="t" style="left:332px;top:663px;font-size:15px;color:#eeeae6;">hours</div><div class="t" style="left:494px;top:90px;font-size:15px;color:#eeeae6;letter-spacing:0.148px;">File d'attente de séquences</div><div class="t" style="left:528px;top:150px;font-size:15px;color:#eeeae6;letter-spacing:0.328px;">État</div><div class="t" style="left:610px;top:150px;font-size:15px;color:#eeeae6;letter-spacing:0.276px;">Filtre</div><div class="t" style="left:696px;top:150px;font-size:15px;color:#eeeae6;letter-spacing:0.117px;">Type</div><div class="t" style="left:787px;top:150px;font-size:15px;color:#eeeae6;letter-spacing:-0.229px;">Bin</div><div class="t" style="left:869px;top:150px;font-size:15px;color:#eeeae6;letter-spacing:0.047px;">Exp</div><div class="t" style="left:955px;top:150px;font-size:15px;color:#eeeae6;letter-spacing:-0.615px;">ISO</div><div class="t" style="left:1034px;top:150px;font-size:15px;color:#eeeae6;letter-spacing:0.863px;">Total</div><div class="t" style="left:494px;top:536px;font-size:15px;color:#eeeae6;letter-spacing:-0.295px;">FITS Viewer</div><div class="t" style="left:518px;top:564px;font-size:15px;color:#eeeae6;letter-spacing:0.031px;">A<u>u</u>to Dark</div><div class="t" style="left:599px;top:564px;font-size:15px;color:#eeeae6;letter-spacing:0.156px;">Effects:</div><div class="t" style="left:657px;top:564px;font-size:15px;color:#eeeae6;">--</div><div class="t" style="left:494px;top:593px;font-size:15px;color:#eeeae6;letter-spacing:0.087px;">Progression</div><div class="t" style="left:499px;top:619px;font-size:15px;color:#eeeae6;letter-spacing:0.038px;">Exposition :</div><div class="t" style="left:642px;top:619px;font-size:15px;color:#eeeae6;letter-spacing:0.223px;">second left</div><div class="t" style="left:499px;top:640px;font-size:15px;color:#eeeae6;letter-spacing:-0.106px;">Progression :</div><div class="t" style="left:648px;top:640px;font-size:15px;color:#eeeae6;letter-spacing:0.052px;">sur</div><div class="t" style="left:729px;top:640px;font-size:15px;color:#eeeae6;letter-spacing:0.310px;">effectué(s)</div><div class="t" style="left:1017px;top:702px;font-size:15px;color:#eeeae6;letter-spacing:0.080px;"><u>O</u>ptions...</div>
</body></html>
